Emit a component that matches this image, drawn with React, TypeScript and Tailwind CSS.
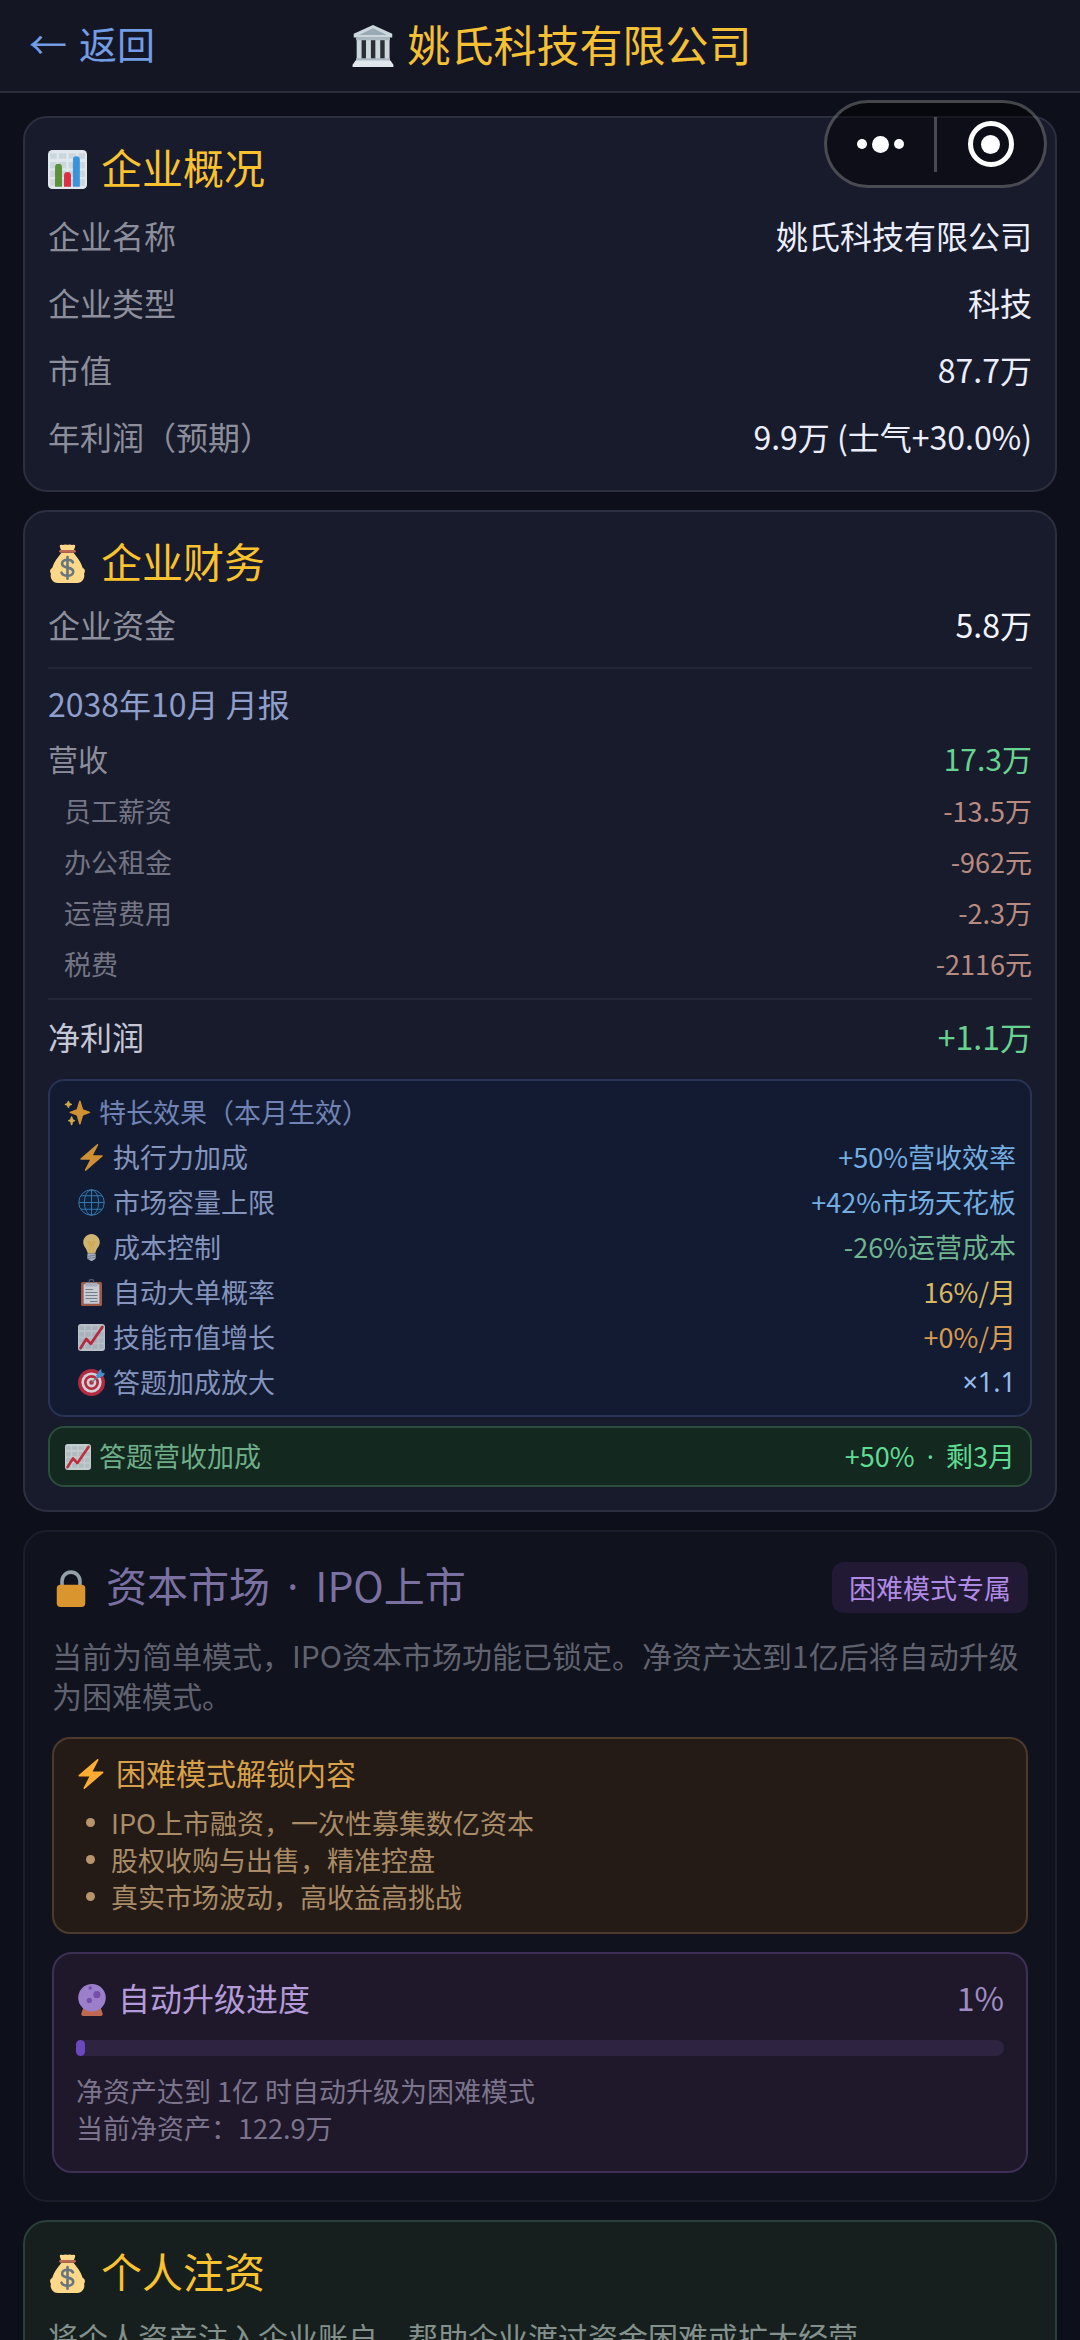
import type { ReactNode } from 'react'
import clsx from 'clsx'

/**
 * 企业详情页
 *
 *  - 企业概况 / 企业财务（月报、特长效果）
 *  - IPO 资本市场（简单模式下锁定）
 *  - 个人注资
 */

interface IconProps {
  className?: string
}

interface RowItem {
  label: string
  value: string
}

interface PerkItem extends RowItem {
  Icon:       (props: IconProps) => ReactNode
  valueClass: string
}

/* ---------- 图标 ---------- */

function BankIcon({ className }: IconProps) {
  return (
    <svg viewBox="0 0 36 36" className={className} aria-hidden="true">
      <path fill="#292f33" d="M7 12h22v18H7z" />
      <path fill="#ccd6dd" d="M4 12h4.200v18H4zM12 12h4.200v18H12zM20 12h4.200v18H20zM28 12h4.200v18H28z" />
      <path fill="#aab8c2" d="M3.500 10.500h29V13h-29zM3.500 28.500h29V31h-29z" />
      <path fill="#ccd6dd" d="M18 0 1.500 7.500v3.300h33V7.500z" />
      <path fill="#9aaab4" d="M18 2.800 6 8.500h24z" />
      <path fill="#e1e8ed" d="M3 30.500h30L35.500 34v2H.5v-2z" />
    </svg>
  )
}

function ChartGrid() {
  return (
    <>
      <rect width="36" height="36" rx="4" fill="#e1e8ed" />
      <g fill="#ccd6dd">
        <path d="M2 3h6v5H2zM10 3h7v5h-7zM19 3h7v5h-7zM28 3h6v5h-6z" />
        <path d="M2 11h6v6H2zM10 11h7v6h-7zM19 11h7v6h-7zM28 11h6v6h-6z" />
        <path d="M2 19h6v6H2zM10 19h7v6h-7zM19 19h7v6h-7zM28 19h6v6h-6z" />
        <path d="M2 27h6v6H2zM10 27h7v6h-7zM19 27h7v6h-7zM28 27h6v6h-6z" />
      </g>
    </>
  )
}

function BarChartIcon({ className }: IconProps) {
  return (
    <svg viewBox="0 0 36 36" className={className} aria-hidden="true">
      <ChartGrid />
      <path fill="#5c913b" d="M6.500 34V16a3.200 3.200 0 0 1 6.400 0v18z" />
      <path fill="#dd2e44" d="M14.800 34V23.500a3.200 3.200 0 0 1 6.400 0V34z" />
      <path fill="#3b94d9" d="M23 34V9a3.200 3.200 0 0 1 6.400 0v25z" />
    </svg>
  )
}

function TrendIcon({ className }: IconProps) {
  return (
    <svg viewBox="0 0 36 36" className={className} aria-hidden="true">
      <ChartGrid />
      <path d="M3.500 32 11 20l6 6.500L32.500 4" fill="none" stroke="#dd2e44" strokeWidth="3.600" strokeLinecap="round" strokeLinejoin="round" />
    </svg>
  )
}

function MoneyBagIcon({ className }: IconProps) {
  return (
    <svg viewBox="0 0 36 36" className={className} aria-hidden="true">
      <path fill="#fdd888" d="M11 2.500C10.500 1 11.500.2 13 .8c1.400.6 2-.6 3.200-.3 1.300.3 2.300.3 3.600 0 1.200-.3 1.800.9 3.200.3 1.500-.6 2.500.2 2 1.700L23.500 7h-11z" />
      <path fill="#fdd888" d="M12.500 8h11c3 3.500 7 8.500 8.500 14 2.500 1.500 2.600 3.500 1.300 5.500 1.200 4-1.800 8.500-6.300 8.500H9c-4.500 0-7.500-4.500-6.300-8.500C1.400 25.500 1.500 23.500 4 22c1.500-5.500 5.500-10.500 8.500-14z" />
      <path fill="#bf6952" d="M11.500 5.500h13a1.200 1.200 0 0 1 0 2.500h-13a1.200 1.200 0 0 1 0-2.500z" />
      <path d="M23 17c-.8-1.600-2.600-2.400-5-2.400-3 0-5 1.400-5 3.600 0 5 10.300 2.200 10.300 7.300 0 2.200-2.200 3.800-5.300 3.800-2.700 0-4.700-1-5.500-2.800M18 12v20" fill="none" stroke="#67757f" strokeWidth="2.400" strokeLinecap="round" />
    </svg>
  )
}

function SparklesIcon({ className }: IconProps) {
  return (
    <svg viewBox="0 0 36 36" className={className} aria-hidden="true">
      <path fill="#ffac33" d="M34.347 16.893l-8.899-3.294-3.323-10.891c-.128-.42-.517-.708-.956-.708-.439 0-.828.288-.956.708l-3.322 10.891-8.900 3.294c-.393.146-.653.519-.653.938 0 .418.260.793.653.938l8.895 3.293 3.324 11.223c.126.424.516.715.959.715.442 0 .833-.291.959-.716l3.324-11.223 8.896-3.293c.391-.144.652-.518.652-.937 0-.418-.261-.792-.653-.938z" />
      <path fill="#ffcc4d" d="M14.347 27.894l-2.314-.856-.9-3.300c-.118-.436-.513-.738-.964-.738-.451 0-.846.302-.965.737l-.9 3.300-2.313.856c-.393.146-.653.520-.653.938 0 .418.260.792.653.938l2.301.853.907 3.622c.112.444.511.756.970.756.459 0 .858-.312.970-.757l.907-3.622 2.301-.853c.393-.144.653-.518.653-.936 0-.418-.260-.792-.653-.938zM10.009 6.231l-2.364-.875-.876-2.365c-.145-.393-.519-.653-.938-.653-.418 0-.792.260-.938.653l-.875 2.365-2.365.875c-.393.146-.653.520-.653.938 0 .418.260.792.653.938l2.365.875.875 2.365c.146.393.520.653.938.653.418 0 .792-.260.938-.653l.875-2.365 2.365-.875c.393-.146.653-.520.653-.938 0-.418-.260-.792-.653-.938z" />
    </svg>
  )
}

function BoltIcon({ className }: IconProps) {
  return (
    <svg viewBox="0 0 36 36" className={className} aria-hidden="true">
      <path fill="#ffac33" d="M32.938 15.651C32.792 15.260 32.418 15 32 15H19.925L26.890 1.458c.219-.426.106-.947-.271-1.243C26.437.071 26.218 0 26 0c-.233 0-.466.082-.653.243L18 6.588 3.347 19.243c-.316.273-.430.714-.284 1.105S3.582 21 4 21h12.075L9.110 34.542c-.219.426-.106.947.271 1.243.182.144.401.215.619.215.233 0 .466-.082.653-.243L18 29.412l14.653-12.655c.317-.273.430-.714.285-1.106z" />
    </svg>
  )
}

function GlobeIcon({ className }: IconProps) {
  return (
    <svg viewBox="0 0 36 36" className={className} aria-hidden="true">
      <circle cx="18" cy="18" r="17" fill="#0d2444" />
      <g fill="none" stroke="#4290c8" strokeWidth="1.300">
        <circle cx="18" cy="18" r="17" />
        <ellipse cx="18" cy="18" rx="9.500" ry="17" />
        <path d="M18 1v34M1 18h34M4 9h28M4 27h28" />
      </g>
    </svg>
  )
}

function BulbIcon({ className }: IconProps) {
  return (
    <svg viewBox="0 0 36 36" className={className} aria-hidden="true">
      <path fill="#ffd983" d="M29 11.060C29 16.500 25.300 18 23.500 24c-.2.900-.5 2-1.500 2h-8c-1 0-1.300-1.100-1.500-2C10.700 18 7 16.500 7 11.060 7 4.950 11.900 0 18 0s11 4.950 11 11.060z" />
      <path fill="none" stroke="#ffcc4d" strokeWidth="1.400" d="M16 25V15c-3-3-3-5-1-5s2 3 3 5c1-2 1-5 3-5s2 2-1 5v10" />
      <path fill="#ccd6dd" d="M12.500 26h11v6c0 1.500-2 2.500-3 2.500-.5 1-1.500 1.500-2.500 1.500s-2-.5-2.500-1.500c-1 0-3-1-3-2.500z" />
      <path stroke="#8899a6" strokeWidth="1.400" d="M12.500 30 23.500 28M12.500 33 23.500 31" />
    </svg>
  )
}

function ClipboardIcon({ className }: IconProps) {
  return (
    <svg viewBox="0 0 36 36" className={className} aria-hidden="true">
      <rect x="4" y="4" width="28" height="32" rx="2" fill="#c1694f" />
      <path fill="#f5f8fa" d="M7.500 7h21v26h-21z" />
      <circle cx="18" cy="3.500" r="3" fill="none" stroke="#5b6a75" strokeWidth="1.800" />
      <path fill="#ccd6dd" d="M11 5h14a1 1 0 0 1 1 1v4H10V6a1 1 0 0 1 1-1z" />
      <path stroke="#8899a6" strokeWidth="1.500" d="M10 14h10M10 18h16M10 22h16M10 26h16M16 30h10" />
    </svg>
  )
}

function TargetIcon({ className }: IconProps) {
  return (
    <svg viewBox="0 0 36 36" className={className} aria-hidden="true">
      <circle cx="18" cy="18" r="18" fill="#dd2e44" />
      <circle cx="18" cy="18" r="13.500" fill="#fff" />
      <circle cx="18" cy="18" r="10" fill="#dd2e44" />
      <circle cx="18" cy="18" r="6.500" fill="#fff" />
      <circle cx="18" cy="18" r="3" fill="#dd2e44" />
      <path d="m18 18 9-8" stroke="#8899a6" strokeWidth="1.800" />
      <path fill="#55acee" d="m24 9 4.500-7.500L31 0l.5 4.500L36 6l-2 3-7.500 3.500z" />
    </svg>
  )
}

function LockIcon({ className }: IconProps) {
  return (
    <svg viewBox="0 0 36 36" className={className} aria-hidden="true">
      <path d="M9.500 18v-6.500a8.500 8.500 0 0 1 17 0V18" fill="none" stroke="#aab8c2" strokeWidth="3.400" />
      <rect x="4.500" y="15" width="27" height="21" rx="3.500" fill="#ffac33" />
    </svg>
  )
}

function CrystalBallIcon({ className }: IconProps) {
  return (
    <svg viewBox="0 0 36 36" className={className} aria-hidden="true">
      <path fill="#bf6952" d="M8 27h20l2 6.500c.4 1.500-.5 2.500-2 2.500H8c-1.500 0-2.400-1-2-2.500z" />
      <circle cx="18" cy="15.500" r="15.500" fill="#9c7fcb" />
      <g fill="#7450a8">
        <circle cx="23.500" cy="12" r="4" />
        <circle cx="15" cy="18.500" r="3" />
        <circle cx="16" cy="4.500" r="2" />
      </g>
    </svg>
  )
}

/* ---------- 数据 ---------- */

const OVERVIEW: RowItem[] = [
  { label: '企业名称',         value: '姚氏科技有限公司' },
  { label: '企业类型',         value: '科技' },
  { label: '市值',             value: '87.7万' },
  { label: '年利润（预期）',   value: '9.9万 (士气+30.0%)' },
]

const COSTS: RowItem[] = [
  { label: '员工薪资', value: '-13.5万' },
  { label: '办公租金', value: '-962元' },
  { label: '运营费用', value: '-2.3万' },
  { label: '税费',     value: '-2116元' },
]

const PERKS: PerkItem[] = [
  { Icon: BoltIcon,      label: '执行力加成',   value: '+50%营收效率',   valueClass: 'text-[#74aee0]' },
  { Icon: GlobeIcon,     label: '市场容量上限', value: '+42%市场天花板', valueClass: 'text-[#74aee0]' },
  { Icon: BulbIcon,      label: '成本控制',     value: '-26%运营成本',   valueClass: 'text-[#6fb58d]' },
  { Icon: ClipboardIcon, label: '自动大单概率', value: '16%/月',         valueClass: 'text-[#d9b860]' },
  { Icon: TrendIcon,     label: '技能市值增长', value: '+0%/月',         valueClass: 'text-[#d69a52]' },
  { Icon: TargetIcon,    label: '答题加成放大', value: '×1.1',           valueClass: "font-['Noto_Sans',sans-serif] text-[#94bdea]" },
]

const UNLOCKS = [
  'IPO上市融资，一次性募集数亿资本',
  '股权收购与出售，精准控盘',
  '真实市场波动，高收益高挑战',
]

const PROGRESS = 1

/* ---------- 通用组件 ---------- */

function Card({ className, children }: { className: string; children: ReactNode }) {
  return <section className={clsx('rounded-3xl border-2', className)}>{children}</section>
}

function CardTitle({ Icon, children }: { Icon: (props: IconProps) => ReactNode; children: ReactNode }) {
  return (
    <h2 className="flex items-center gap-[14px] text-[41px] leading-[57px] text-[#f9c22e]">
      <Icon className="mt-[6px] size-[39px]" />
      <span>{children}</span>
    </h2>
  )
}

function Row({ label, value, className, valueClass }: RowItem & { className: string; valueClass: string }) {
  return (
    <div className={clsx('flex items-center justify-between', className)}>
      <dt>{label}</dt>
      <dd className={valueClass}>{value}</dd>
    </div>
  )
}

/* 半角间隔点，中文字体里的是全角 */
function Dot({ className }: { className: string }) {
  return <span className={clsx("font-['Noto_Sans',sans-serif]", className)}>·</span>
}

/* 小程序右上角胶囊 */
function Capsule() {
  return (
    <div className="absolute top-[100px] right-[33px] flex h-[88px] w-[223px] items-center rounded-full border-[3px] border-white/25 bg-black/45">
      <button type="button" aria-label="更多" className="flex flex-1 items-center justify-center gap-[5px]">
        <span className="size-[10px] rounded-full bg-white" />
        <span className="size-[17px] rounded-full bg-white" />
        <span className="size-[10px] rounded-full bg-white" />
      </button>
      <span className="h-[55px] w-[3px] bg-white/25" />
      <button type="button" aria-label="关闭" className="flex flex-1 items-center justify-center">
        <span className="flex size-[46px] items-center justify-center rounded-full border-[5px] border-white">
          <span className="size-[19px] rounded-full bg-white" />
        </span>
      </button>
    </div>
  )
}

/* ---------- 页面 ---------- */

export default function App() {
  return (
    <div className="relative h-screen overflow-hidden bg-[#0d0f1a] font-['Noto_Sans_CJK_SC',sans-serif] text-[32px] text-[#8c8e9b]">

      {/* 顶部栏 */}
      <header className="flex h-[93px] items-center justify-between border-b-2 border-[#2b2d3b] bg-[#141624] px-[29px] pb-[5px]">
        <button type="button" className="flex items-center gap-[12px] text-[38px] leading-[56px] text-[#729ce4]">
          <span>←</span>
          <span>返回</span>
        </button>
        <h1 className="flex items-center gap-[14px] text-[43px] leading-[62px] text-[#f5c033]">
          <BankIcon className="mt-[5px] size-[42px]" />
          <span>姚氏科技有限公司</span>
        </h1>
        <div className="w-[103px]" />
      </header>

      <main className="flex flex-col gap-[18px] px-[23px] pt-[23px]">

        {/* 企业概况 */}
        <Card className="border-[#2c2f40] bg-[#181b2b] px-[23px] pt-[20px] pb-[21px]">
          <CardTitle Icon={BarChartIcon}>企业概况</CardTitle>
          <dl className="mt-[6px]">
            {OVERVIEW.map(item => (
              <Row key={item.label} {...item} className="h-[67px]" valueClass="text-[#eceefc]" />
            ))}
          </dl>
        </Card>

        {/* 企业财务 */}
        <Card className="border-[#2c2f40] bg-[#181b2b] px-[23px] pt-[20px] pb-[23px]">
          <CardTitle Icon={MoneyBagIcon}>企业财务</CardTitle>
          <dl className="mt-[6px]">
            <Row label="企业资金" value="5.8万" className="h-[58px]" valueClass="text-[#f4f5ff]" />
          </dl>

          <div className="mt-[14px] border-t-2 border-[#232636] pt-[7px]">
            <h3 className="leading-[54px] text-[#8f9fcb]">2038年10月 月报</h3>
            <dl>
              <Row label="营收" value="17.3万" className="h-[56px] text-[30px]" valueClass="text-[#68d391]" />
              {COSTS.map(item => (
                <Row
                  key={item.label}
                  {...item}
                  className="h-[51px] pl-4 text-[27px] text-[#737584]"
                  valueClass="text-[#b98a80]"
                />
              ))}
              <div className="mt-[8px] border-t-2 border-[#232636] pt-[8px]">
                <Row label="净利润" value="+1.1万" className="h-[56px] text-[#c5c7d6]" valueClass="text-[#68d391]" />
              </div>
            </dl>
          </div>

          {/* 特长效果 */}
          <div className="mt-[15px] rounded-2xl border-2 border-[#293354] bg-[#131b33] px-[14px] pt-[9px] pb-[10px] text-[27px] text-[#8494bd]">
            <h3 className="flex h-[45px] items-center gap-[8px] text-[#7183b4]">
              <SparklesIcon className="size-[27px] opacity-80" />
              <span>特长效果（本月生效）</span>
            </h3>
            <dl>
              {PERKS.map(({ Icon, label, value, valueClass }) => (
                <div key={label} className="flex h-[45px] items-center justify-between pl-[14px]">
                  <dt className="flex items-center gap-[8px]">
                    <Icon className="size-[27px] opacity-80" />
                    <span>{label}</span>
                  </dt>
                  <dd className={valueClass}>{value}</dd>
                </div>
              ))}
            </dl>
          </div>

          <div className="mt-[9px] flex h-[61px] items-center justify-between rounded-2xl border-2 border-[#2b4d3b] bg-[#13281f] px-[15px] text-[27px]">
            <span className="flex items-center gap-[8px] text-[#6fae88]">
              <TrendIcon className="size-[26px] opacity-85" />
              <span>答题营收加成</span>
            </span>
            <span className="text-[#5fdc93]">
              +50% <Dot className="mx-[6px]" /> 剩3月
            </span>
          </div>
        </Card>

        {/* 资本市场 · 未解锁 */}
        <Card className="border-[#1b1d2c] bg-[#10121d] px-[27px] pt-[30px] pb-[27px]">
          <div className="flex h-[51px] items-center justify-between">
            <h2 className="flex items-center gap-[16px] text-[41px] text-[#7b70a2]">
              <LockIcon className="size-[38px] opacity-85" />
              <span className="pb-1">
                资本市场 <Dot className="mx-[8px]" /> IPO上市
              </span>
            </h2>
            <span className="rounded-xl bg-[#221a35] px-[17px] text-[27px] leading-[51px] text-[#b18ae6]">
              困难模式专属
            </span>
          </div>
          <p className="mt-[22px] text-[30px] leading-[40px] text-[#60636f]">
            当前为简单模式，IPO资本市场功能已锁定。净资产达到1亿后将自动升级为困难模式。
          </p>

          <div className="mt-[22px] rounded-[18px] border-2 border-[#4d3a2c] bg-[#251b16] px-[22px] pt-[13px] pb-[17px]">
            <h3 className="flex items-center gap-[10px] text-[30px] leading-[40px] text-[#d9a04a]">
              <BoltIcon className="mt-[4px] size-[30px]" />
              <span>困难模式解锁内容</span>
            </h3>
            <ul className="mt-[12px] text-[27px] leading-[37px] text-[#a98b67]">
              {UNLOCKS.map(text => (
                <li key={text} className="flex items-center gap-[16px] pl-[10px]">
                  <span className="size-[9px] rounded-full bg-[#b8946a]" />
                  <span>{text}</span>
                </li>
              ))}
            </ul>
          </div>

          <div className="mt-[18px] rounded-[20px] border-2 border-[#3d2f56] bg-[#1e182a] px-[22px] pt-[20px] pb-[25px]">
            <div className="flex items-center justify-between leading-[46px]">
              <h3 className="flex items-center gap-[10px] text-[#b59ad9]">
                <CrystalBallIcon className="mt-[6px] size-[32px]" />
                <span>自动升级进度</span>
              </h3>
              <span className="text-[#a08bc4]">{PROGRESS}%</span>
            </div>
            <div
              role="progressbar"
              aria-label="自动升级进度"
              aria-valuenow={PROGRESS}
              className="mt-[20px] h-4 rounded-full bg-[#2e2442]"
            >
              <div className="h-full rounded-full bg-[#6b48bd]" style={{ width: `${PROGRESS}%` }} />
            </div>
            <p className="mt-4 text-[27px] leading-[37px] text-[#7c748c]">
              净资产达到 1亿 时自动升级为困难模式
              <br />
              当前净资产：122.9万
            </p>
          </div>
        </Card>

        {/* 个人注资 */}
        <Card className="border-[#2a3f3a] bg-[#161f1d] px-[23px] pt-[20px] pb-[21px]">
          <CardTitle Icon={MoneyBagIcon}>个人注资</CardTitle>
          <p className="mt-[15px] text-[30px] leading-[45px] text-[#83908c]">
            将个人资产注入企业账户，帮助企业渡过资金困难或扩大经营
          </p>
        </Card>
      </main>

      <Capsule />
    </div>
  )
}
